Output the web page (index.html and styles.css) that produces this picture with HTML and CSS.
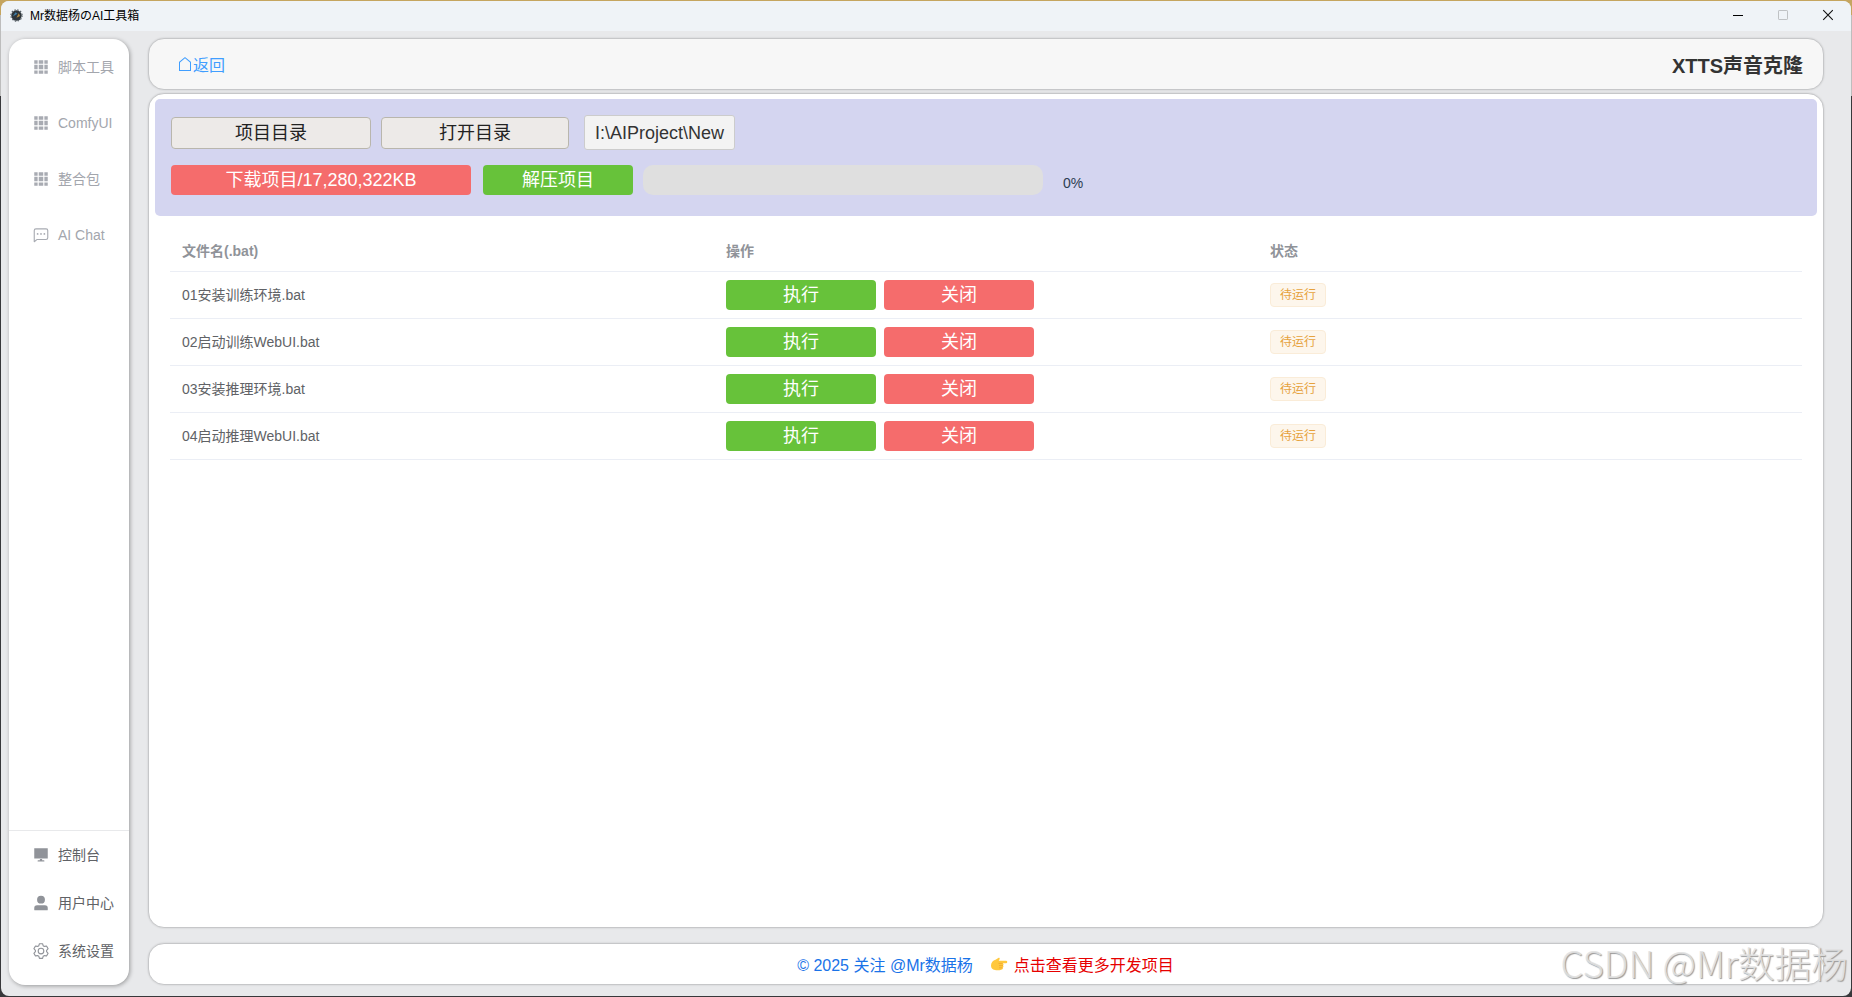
FILE: index.html
```html
<!DOCTYPE html>
<html lang="zh-CN">
<head>
    <meta charset="UTF-8">
    <title>Mr数据杨のAI工具箱</title>
    <link rel="stylesheet" href="styles.css">
</head>
<body>
    <!-- shared icons -->
    <svg class="icon-defs" width="0" height="0">
        <symbol id="icon-grid" viewBox="0 0 1024 1024">
            <path d="M640 384v256H384V384zm64 0h192v256H704zm-64 512H384V704h256zm64 0V704h192v192zm-64-768v192H384V128zm64 0h192v192H704zM320 384v256H128V384zm0 512H128V704h192zm0-768v192H128V128z"/>
        </symbol>
        <symbol id="icon-chat" viewBox="0 0 1024 1024">
            <path d="M273.536 736H800a64 64 0 0 0 64-64V256a64 64 0 0 0-64-64H224a64 64 0 0 0-64 64v570.88zM296 800 147.968 918.4A32 32 0 0 1 96 893.44V256a128 128 0 0 1 128-128h576a128 128 0 0 1 128 128v416a128 128 0 0 1-128 128z"/>
            <path d="M512 499.2a51.2 51.2 0 1 1 0-102.4 51.2 51.2 0 0 1 0 102.4m192 0a51.2 51.2 0 1 1 0-102.4 51.2 51.2 0 0 1 0 102.4m-384 0a51.2 51.2 0 1 1 0-102.4 51.2 51.2 0 0 1 0 102.4"/>
        </symbol>
    </svg>

    <div class="window">
        <div class="titlebar">
            <svg class="app-icon" viewBox="0 0 14 14">
                <circle cx="7" cy="7" r="5.6" fill="#2f363b"/>
                <circle cx="7" cy="7" r="6.1" fill="none" stroke="#59636a" stroke-width="1.2" stroke-dasharray="1.6 1.6"/>
                <path d="M3 8 6 3.500l2 1.500z" fill="#3f7fa8"/>
                <path d="M7 9.500 9.500 4.500l1.300 3z" fill="#b98b3c"/>
            </svg>
            <span class="window-title">Mr数据杨のAI工具箱</span>
            <div class="window-buttons">
                <svg viewBox="0 0 12 12"><path d="M1 6.5h10" stroke="#000"/></svg>
                <svg viewBox="0 0 12 12"><rect x="1.5" y="1.5" width="9" height="9" rx="0.6" stroke="#bfc2c4"/></svg>
                <svg viewBox="0 0 12 12"><path d="M1.2 1.2 10.8 10.8M10.8 1.2 1.2 10.8" stroke="#111" stroke-width="1.1"/></svg>
            </div>
        </div>

        <div class="layout">
            <div class="sidebar">
                <div class="menu-top">
                    <div class="menu-item"><svg><use href="#icon-grid"/></svg>脚本工具</div>
                    <div class="menu-item"><svg><use href="#icon-grid"/></svg>ComfyUI</div>
                    <div class="menu-item"><svg><use href="#icon-grid"/></svg>整合包</div>
                    <div class="menu-item"><svg><use href="#icon-chat"/></svg>AI Chat</div>
                </div>
                <div class="menu-bottom">
                    <div class="menu-item">
                        <svg viewBox="0 0 1024 1024"><path d="M128 128h768v576H128zM448 736h128v80h96a36 36 0 0 1 0 72H352a36 36 0 0 1 0-72h96z"/></svg>控制台
                    </div>
                    <div class="menu-item">
                        <svg viewBox="0 0 1024 1024"><path d="M288 320a224 224 0 1 0 448 0 224 224 0 1 0-448 0m544 608H160a32 32 0 0 1-32-32v-96a160 160 0 0 1 160-160h448a160 160 0 0 1 160 160v96a32 32 0 0 1-32 32z"/></svg>用户中心
                    </div>
                    <div class="menu-item">
                        <svg viewBox="0 0 1024 1024"><path d="M600.704 64a32 32 0 0 1 30.464 22.208l35.2 109.376c14.784 7.232 28.928 15.36 42.432 24.512l112.384-24.192a32 32 0 0 1 34.432 15.36L944.32 364.8a32 32 0 0 1-4.032 37.504l-77.12 85.12a357.12 357.12 0 0 1 0 49.024l77.12 85.248a32 32 0 0 1 4.032 37.504l-88.704 153.6a32 32 0 0 1-34.432 15.296L708.8 803.904c-13.44 9.088-27.648 17.28-42.368 24.512l-35.264 109.376A32 32 0 0 1 600.704 960H423.296a32 32 0 0 1-30.464-22.208L357.696 828.48a351.616 351.616 0 0 1-42.56-24.64l-112.32 24.256a32 32 0 0 1-34.432-15.36L79.68 659.2a32 32 0 0 1 4.032-37.504l77.12-85.248a357.12 357.12 0 0 1 0-48.896l-77.12-85.248A32 32 0 0 1 79.68 364.8l88.704-153.6a32 32 0 0 1 34.432-15.296l112.32 24.256c13.568-9.152 27.776-17.408 42.56-24.64l35.2-109.312A32 32 0 0 1 423.232 64H600.64zm-23.424 64H446.72l-36.352 113.088-24.512 11.968a294.113 294.113 0 0 0-34.816 20.096l-22.656 15.36-116.224-25.088-65.28 113.152 79.68 88.192-1.92 27.136a293.12 293.12 0 0 0 0 40.192l1.92 27.136-79.808 88.192 65.344 113.152 116.224-25.024 22.656 15.296a294.113 294.113 0 0 0 34.816 20.096l24.512 11.968L446.72 896h130.688l36.48-113.152 24.448-11.904a288.282 288.282 0 0 0 34.752-20.096l22.592-15.296 116.288 25.024 65.28-113.152-79.744-88.192 1.92-27.136a293.12 293.12 0 0 0 0-40.256l-1.92-27.136 79.808-88.128-65.344-113.152-116.288 24.96-22.592-15.232a287.616 287.616 0 0 0-34.752-20.096l-24.448-11.904L577.344 128zM512 320a192 192 0 1 1 0 384 192 192 0 0 1 0-384m0 64a128 128 0 1 0 0 256 128 128 0 0 0 0-256"/></svg>系统设置
                    </div>
                </div>
            </div>

            <div class="main">
                <div class="page-header card">
                    <a class="back-link">
                        <svg viewBox="0 0 1024 1024"><path d="M192 413.952V896h640V413.952L512 147.328zM139.52 374.4l352-293.312a32 32 0 0 1 40.96 0l352 293.312A32 32 0 0 1 896 398.976V928a32 32 0 0 1-32 32H160a32 32 0 0 1-32-32V398.976a32 32 0 0 1 11.52-24.576"/></svg>返回
                    </a>
                    <h1>XTTS声音克隆</h1>
                </div>

                <div class="content card">
                    <div class="toolbar">
                        <div class="toolbar-row row-dir">
                            <button class="btn btn-plain btn-project">项目目录</button>
                            <button class="btn btn-plain btn-open">打开目录</button>
                            <div class="path-box">I:\AIProject\New</div>
                        </div>
                        <div class="toolbar-row row-download">
                            <button class="btn btn-danger btn-download">下载项目/17,280,322KB</button>
                            <button class="btn btn-success">解压项目</button>
                            <div class="progress"></div>
                            <span class="progress-text">0%</span>
                        </div>
                    </div>

                    <table class="file-table">
                        <thead>
                            <tr><th>文件名(.bat)</th><th>操作</th><th>状态</th></tr>
                        </thead>
                        <tbody>
                            <tr>
                                <td>01安装训练环境.bat</td>
                                <td><div class="actions"><button class="btn btn-success">执行</button><button class="btn btn-danger">关闭</button></div></td>
                                <td><span class="tag">待运行</span></td>
                            </tr>
                            <tr>
                                <td>02启动训练WebUI.bat</td>
                                <td><div class="actions"><button class="btn btn-success">执行</button><button class="btn btn-danger">关闭</button></div></td>
                                <td><span class="tag">待运行</span></td>
                            </tr>
                            <tr>
                                <td>03安装推理环境.bat</td>
                                <td><div class="actions"><button class="btn btn-success">执行</button><button class="btn btn-danger">关闭</button></div></td>
                                <td><span class="tag">待运行</span></td>
                            </tr>
                            <tr>
                                <td>04启动推理WebUI.bat</td>
                                <td><div class="actions"><button class="btn btn-success">执行</button><button class="btn btn-danger">关闭</button></div></td>
                                <td><span class="tag">待运行</span></td>
                            </tr>
                        </tbody>
                    </table>
                </div>

                <div class="footer card">
                    <a class="copyright">© 2025 关注 @Mr数据杨</a>
                    <a class="more-link">
                        <svg viewBox="0 0 18 16">
                            <path d="M1 9.500C1 6.500 3 4.500 5.500 3.800L8.300 2c1-.5 1.800.4 1.300 1.200L8.700 4.800H16a1.200 1.200 0 0 1 0 2.500h-3.300c1 .3 1.100 1.700.3 2.200.7.5.6 1.700-.3 2.100.5.800 0 1.700-.9 1.900-2 .9-5 1.100-6.800.6C2.300 13.500 1 12 1 9.500z" fill="#ffc83d"/>
                            <path d="M8.500 7.400h4M9 9.600h4M9 11.800h3.500" stroke="#e59a2c" stroke-width=".6" fill="none"/>
                        </svg>点击查看更多开发项目
                    </a>
                </div>
            </div>
        </div>
    </div>
    <div class="watermark">CSDN @Mr数据杨</div>
</body>
</html>
```
FILE: styles.css
```css
* {
    box-sizing: border-box;
}
body {
    margin: 0;
    padding: 1px;
    height: 997px;
    overflow: hidden;
    font-family: "Liberation Sans", Arial, "Noto Sans CJK SC", sans-serif;
    font-size: 14px;
    color: #333;
    /* desktop behind the window */
    background: linear-gradient(#c5a55f 0, #c5a55f 15px, #bdbdbd 15px, #bdbdbd 96px, #38383b 96px);
}
.icon-defs {
    display: none;
}
.window {
    display: flex;
    flex-direction: column;
    height: 995px;
    background: #e8e9eb;
    border-radius: 8px;
    overflow: hidden;
}

/* title bar */
.titlebar {
    display: flex;
    align-items: center;
    height: 30px;
    padding: 0 17px 0 9px;
    background: #eff3f7;
    color: #000;
    font-size: 12px;
    line-height: 16px;
}
.app-icon {
    width: 13px;
    height: 13px;
    margin: 0 7px 2px 0;
}
.window-buttons {
    display: flex;
    gap: 33px;
    margin-left: auto;
}
.window-buttons svg {
    width: 12px;
    height: 12px;
    margin-bottom: 2px;
    fill: none;
}

.layout {
    display: flex;
    flex: 1;
    gap: 19px;
    padding: 8px 27px 11px 8px;
}

/* sidebar */
.sidebar {
    display: flex;
    flex-direction: column;
    width: 120px;
    background: #fff;
    border-radius: 16px;
    box-shadow: 1px 1px 4px rgba(0, 0, 0, 0.35);
}
.menu-item {
    display: flex;
    align-items: center;
    gap: 8px;
    height: 56px;
    padding-left: 23px;
    color: #a3a6ad;
    line-height: 20px;
    white-space: nowrap;
}
.menu-item svg {
    width: 18px;
    height: 18px;
    fill: #a8abb2;
}
.menu-bottom {
    height: 155px;
    margin-top: auto;
    border-top: 1px solid #e8e9eb;
}
.menu-bottom .menu-item {
    height: 48px;
    color: #606266;
}
.menu-bottom svg {
    fill: #909399;
}

/* right side */
.main {
    display: flex;
    flex-direction: column;
    flex: 1;
    margin-top: -1px;
}
.card {
    background: #fff;
    border: 1px solid #c6c7c9;
    border-radius: 16px;
    box-shadow: 0 0 2px rgba(0, 0, 0, 0.15);
}
.page-header {
    display: flex;
    align-items: center;
    justify-content: space-between;
    height: 52px;
    padding: 0 20px 0 28px;
    background: #f7f7f7;
}
.page-header h1 {
    margin: 0;
    font-size: 20px;
}
.back-link {
    display: flex;
    align-items: center;
    color: #409eff;
    font-size: 16px;
}
.back-link svg {
    width: 16px;
    height: 16px;
    fill: #409eff;
}
.content {
    height: 835px;
    margin-top: 3px;
    padding: 5px 6px;
}
.toolbar {
    height: 117px;
    padding: 16px;
    background: #d4d5f0;
    border-radius: 5px;
}
.toolbar-row {
    display: flex;
    align-items: center;
}
.row-dir {
    height: 35px;
}
.row-download {
    margin-top: 15px;
}
.btn {
    width: 150px;
    height: 30px;
    padding: 0;
    border: none;
    border-radius: 4px;
    color: #fff;
    font-family: inherit;
    font-size: 18px;
    line-height: 30px;
}
.btn-plain {
    height: 32px;
    color: #222;
    background: #edeae8;
    border: 1px solid #b9b6ad;
}
.btn-project {
    width: 200px;
    margin-right: 10px;
}
.btn-open {
    width: 188px;
    margin-right: 15px;
}
.btn-download {
    width: 300px;
    margin-right: 12px;
}
.btn-danger {
    background: #f56c6c;
}
.btn-success {
    background: #67c23a;
}
.path-box {
    width: 151px;
    height: 35px;
    border: 1px solid #ccc;
    border-radius: 3px;
    background: #f3f3f3;
    font-size: 18px;
    line-height: 35px;
    text-align: center;
}
.progress {
    width: 400px;
    height: 30px;
    margin: 0 20px 0 10px;
    background: #dfdfdf;
    border-radius: 10px;
}
.progress-text {
    margin-top: 6px;
    color: #2c3e50;
}

/* file list */
.file-table {
    width: 1632px;
    margin: 15px 0 0 15px;
    border-collapse: separate;
    border-spacing: 0;
    table-layout: fixed;
}
.file-table th,
.file-table td {
    height: 47px;
    padding: 0 12px;
    border-bottom: 1px solid #ebeef5;
    text-align: left;
    color: #606266;
    line-height: 20px;
}
.file-table th {
    height: 41px;
    color: #909399;
}
.actions {
    display: flex;
    gap: 8px;
}
.tag {
    display: block;
    width: 56px;
    height: 24px;
    border: 1px solid #faecd8;
    border-radius: 4px;
    background: #fdf6ec;
    color: #e6a23c;
    font-size: 12px;
    line-height: 22px;
    text-align: center;
}

.footer {
    display: flex;
    align-items: center;
    justify-content: center;
    gap: 17px;
    height: 42px;
    margin-top: 15px;
    padding-right: 1px;
    font-size: 16px;
}
.copyright {
    color: #1a73e8;
}
.more-link {
    display: flex;
    align-items: center;
    gap: 6px;
    color: #e60000;
}
.more-link svg {
    width: 18px;
    height: 16px;
}

.watermark {
    position: absolute;
    right: 4px;
    bottom: 9px;
    color: rgba(226, 226, 226, 0.9);
    font-family: "Noto Sans CJK SC", sans-serif;
    font-size: 36.7px;
    font-weight: 300;
    line-height: 52px;
    text-shadow: 1px 1px 1px #999;
}
```
